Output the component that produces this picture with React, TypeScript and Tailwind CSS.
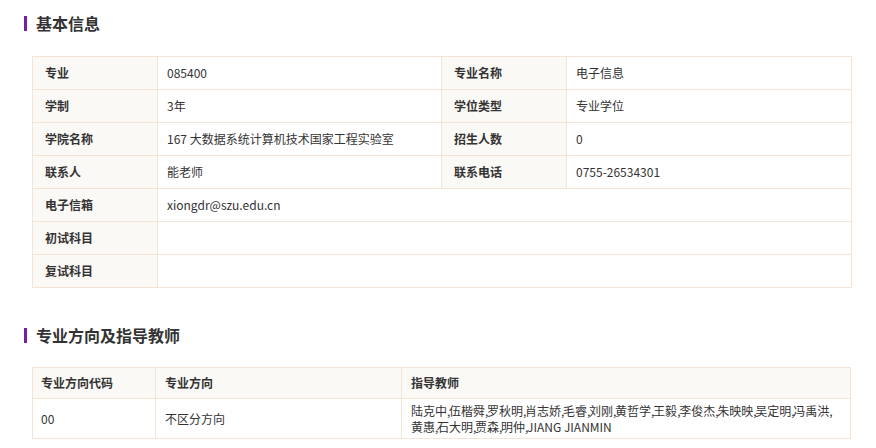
import React from "react"

const info = [
  ["专业", "085400", "专业名称", "电子信息"],
  ["学制", "3年", "学位类型", "专业学位"],
  ["学院名称", "167 大数据系统计算机技术国家工程实验室", "招生人数", "0"],
  ["联系人", "能老师", "联系电话", "0755-26534301"],
]

const wide = [
  ["电子信箱", "xiongdr@szu.edu.cn"],
  ["初试科目", ""],
  ["复试科目", ""],
]

const teachers1 = ["陆克中", "伍楷舜", "罗秋明", "肖志娇", "毛睿", "刘刚", "黄哲学", "王毅", "李俊杰", "朱映映", "吴定明", "冯禹洪"]
const teachers2 = ["黄惠", "石大明", "贾森", "明仲", "JIANG JIANMIN"]

function Heading({ title }: { title: string }) {
  return (
    <div className="flex items-center h-[16px]">
      <span className="w-[3px] h-[15px] bg-[#7a1ea1]"></span>
      <h2 className="ml-[9px] text-[16px] font-bold leading-[16px] text-[#333]">{title}</h2>
    </div>
  )
}

// commas in the original are rendered very narrow
function Names({ list, trailing }: { list: string[]; trailing?: boolean }) {
  return (
    <div className="whitespace-nowrap">
      {list.map((n, i) => (
        <React.Fragment key={n}>
          {n}
          {(i < list.length - 1 || trailing) && <span className="inline-block w-[2px]">,</span>}
        </React.Fragment>
      ))}
    </div>
  )
}

const label = "border border-[#f3e4d5] bg-[#fbf9f6] pl-[12px] font-bold text-left"
const value = "border border-[#f3e4d5] bg-white pl-[9px]"

export default function App() {
  return (
    <div
      className="w-[876px] h-[448px] overflow-hidden bg-white text-[#333] px-[24px] pt-[15px]"
      style={{ fontFamily: '"Microsoft YaHei", "Noto Sans CJK SC", sans-serif' }}
    >
      <Heading title="基本信息" />

      <table className="ml-[8px] mt-[25px] w-[819px] border-collapse text-[12px] table-fixed">
        <colgroup>
          <col className="w-[125px]" />
          <col className="w-[284px]" />
          <col className="w-[125px]" />
          <col className="w-[285px]" />
        </colgroup>
        <tbody>
          {info.map((r) => (
            <tr key={r[0]} className="h-[33px]">
              <th className={label}>{r[0]}</th>
              <td className={value}>{r[1]}</td>
              <th className={label}>{r[2]}</th>
              <td className={value}>{r[3]}</td>
            </tr>
          ))}
          {wide.map((r) => (
            <tr key={r[0]} className="h-[33px]">
              <th className={label}>{r[0]}</th>
              <td className={value} colSpan={3}>
                {r[1]}
              </td>
            </tr>
          ))}
        </tbody>
      </table>

      <div className="mt-[39px]">
        <Heading title="专业方向及指导教师" />
      </div>

      <table className="ml-[8px] mt-[24px] w-[818px] border-collapse text-[12px] table-fixed">
        <colgroup>
          <col className="w-[123px]" />
          <col className="w-[246px]" />
          <col className="w-[449px]" />
        </colgroup>
        <thead>
          <tr className="h-[31px] bg-[#fbf9f6]">
            <th className="border border-[#f3e4d5] pl-[8px] font-bold text-left">专业方向代码</th>
            <th className="border border-[#f3e4d5] pl-[9px] font-bold text-left">专业方向</th>
            <th className="border border-[#f3e4d5] pl-[9px] font-bold text-left">指导教师</th>
          </tr>
        </thead>
        <tbody>
          <tr className="h-[40px]">
            <td className="border border-[#f3e4d5] pl-[8px]">00</td>
            <td className="border border-[#f3e4d5] pl-[9px]">不区分方向</td>
            <td className="border border-[#f3e4d5] pl-[9px] leading-[16px]">
              <Names list={teachers1} trailing />
              <Names list={teachers2} />
            </td>
          </tr>
        </tbody>
      </table>
    </div>
  )
}
